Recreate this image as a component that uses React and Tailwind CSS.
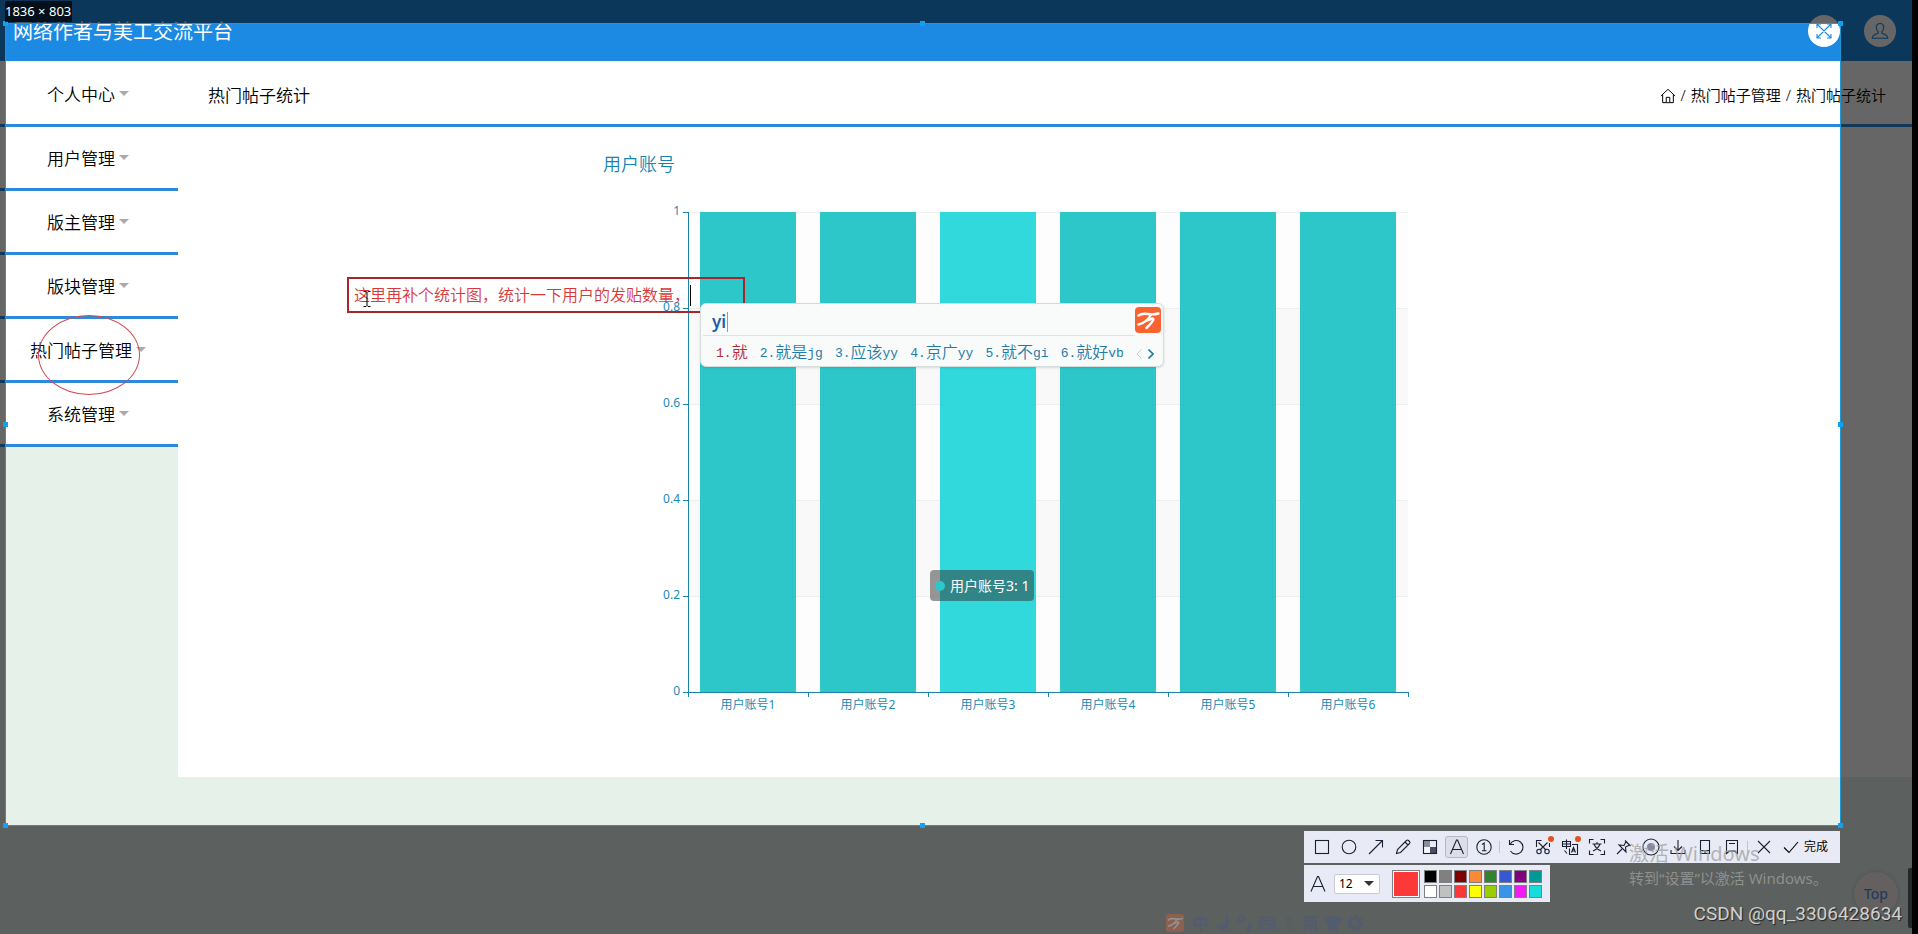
import { useState } from "react";
import clsx from "clsx";

const menus = ["个人中心", "用户管理", "版主管理", "版块管理", "热门帖子管理", "系统管理"];

const users = ["用户账号1", "用户账号2", "用户账号3", "用户账号4", "用户账号5", "用户账号6"];

const candidates = [
  { no: 1, word: "就", code: "" },
  { no: 2, word: "就是", code: "jg" },
  { no: 3, word: "应该", code: "yy" },
  { no: 4, word: "京广", code: "yy" },
  { no: 5, word: "就不", code: "gi" },
  { no: 6, word: "就好", code: "vb" },
];

const swatches = [
  ["黑", "bg-black"],
  ["灰", "bg-[#808080]"],
  ["深红", "bg-[#7f0000]"],
  ["橙", "bg-[#f98b36]"],
  ["绿", "bg-[#2f842d]"],
  ["蓝", "bg-[#3659d3]"],
  ["紫", "bg-[#800080]"],
  ["青", "bg-[#009a98]"],
  ["白", "bg-white"],
  ["浅灰", "bg-[#c0c0c0]"],
  ["红", "bg-[#fd3838]"],
  ["黄", "bg-[#ffff00]"],
  ["浅绿", "bg-[#9acd00]"],
  ["浅蓝", "bg-[#3894e4]"],
  ["洋红", "bg-[#f31bf3]"],
  ["浅青", "bg-[#16dcdc]"],
];

function Icon({ children, className = "size-[18px]" }) {
  return (
    <svg
      viewBox="0 0 18 18"
      className={className}
      fill="none"
      stroke="currentColor"
      strokeWidth="1.1"
      aria-hidden="true"
    >
      {children}
    </svg>
  );
}

function Logo({ className }) {
  return (
    <svg viewBox="0 0 26 26" className={className} aria-hidden="true">
      <rect width="26" height="26" rx="4" fill="#f96332" />
      <g fill="none" stroke="#fff" strokeWidth="2.4" strokeLinecap="round" strokeLinejoin="round">
        <path d="M3.500 8.500C7 6 10 6.500 13 7S20 7.500 23.500 6.500" />
        <path d="M3.500 17.500C8 16.500 13 13 15.500 8.500" />
        <path d="M11.500 13.500L17.500 11.500C19.500 11.500 18 15 11.500 21" />
      </g>
    </svg>
  );
}

function Header() {
  return (
    <header className="flex h-[61px] items-center justify-between bg-[#1c89e3] pr-4 pl-[13px]">
      <h1 className="pt-0.5 text-xl leading-5 text-white">网络作者与美工交流平台</h1>
      <div className="flex gap-6 text-[#1c89e3]">
        <button aria-label="全屏" className="flex size-8 items-center justify-center rounded-full bg-white">
          <Icon>
            <path d="M2 2l14 14M16 2L2 16M2 6V2h4M12 2h4v4M16 12v4h-4M6 16H2v-4" />
          </Icon>
        </button>
        <button aria-label="用户" className="flex size-8 items-center justify-center rounded-full bg-white">
          <Icon>
            <path d="M9 1.500c-2.600 0-3.700 1.800-3.700 4 0 1.900.8 3.300 1.900 4.200v1.600c-3 .9-6 2-6 4.900h15.600c0-2.900-3-4-6-4.900V9.700c1.100-.9 1.900-2.300 1.900-4.200 0-2.200-1.100-4-3.700-4z" />
          </Icon>
        </button>
      </div>
    </header>
  );
}

function Sidebar() {
  return (
    <nav className="w-[178px] shrink-0">
      <ul className="bg-white pt-0.5">
        {menus.map((name) => (
          <li key={name} className="border-b-3 border-[#2e89dd]">
            <a
              href="#"
              className="flex h-[61px] items-center justify-center gap-1 pt-0.5 pr-0.5 text-[17px] font-[350] text-black"
            >
              {name}
              <svg viewBox="0 0 10 5" className="mb-0.5 h-[5px] w-[10px]" aria-hidden="true">
                <path d="M0 0h10L5 5z" fill="#aaa" />
              </svg>
            </a>
          </li>
        ))}
      </ul>
    </nav>
  );
}

function Breadcrumb() {
  return (
    <div className="flex h-[66px] items-center justify-between border-b-3 border-[#2e89dd] pt-1.5 pr-[26px] pl-[30px] font-[350] text-black">
      <h2 className="text-[17px]">热门帖子统计</h2>
      <div className="flex items-center gap-[5px] text-[15px]">
        <a href="#" aria-label="首页">
          <Icon className="size-4">
            <path d="M1 9l8-7.500L17 9M3 7.500V16.500h12V7.500M7 16V10.500h4V16" />
          </Icon>
        </a>
        <span>/</span>
        <a href="#">热门帖子管理</a>
        <span>/</span>
        <span>热门帖子统计</span>
      </div>
    </div>
  );
}

function Chart({ active }) {
  const left = 90;
  const top = 60;
  const step = 96;
  const slot = 120;

  return (
    <svg viewBox="0 0 900 600" className="h-[600px] w-[900px]" role="img" aria-label="用户账号">
      <text x="5" y="19" fontSize="18" fontWeight="350" fill="#1585b0">
        用户账号
      </text>

      {/* split areas, darker on every second band */}
      {[0, 1, 2, 3, 4].map((i) => (
        <rect
          key={i}
          x={left}
          y={top + i * step}
          width="720"
          height={step}
          fill={i % 2 ? "#f9f9f9" : "#fdfdfd"}
        />
      ))}
      {[0, 1, 2, 3, 4].map((i) => (
        <rect key={i} x={left} y={top + i * step} width="720" height="1" fill="#eee" />
      ))}

      {users.map((name, i) => (
        <g key={name}>
          <rect
            x={left + 12 + i * slot}
            y={top}
            width="96"
            height="480"
            fill={i === active ? "#31d9dc" : "#2ec7c9"}
          />
          <text x={left + 60 + i * slot} y="557" fontSize="12" textAnchor="middle" fill="#1b8ab5">
            {name}
          </text>
        </g>
      ))}

      <g fill="#1b82a8">
        <rect x={left} y={top} width="1" height="485" />
        <rect x={left - 5} y="540" width="726" height="1" />
        {[0, 1, 2, 3, 4].map((i) => (
          <rect key={i} x={left - 5} y={top + i * step} width="5" height="1" />
        ))}
        {[1, 2, 3, 4, 5, 6].map((i) => (
          <rect key={i} x={left + i * slot} y="540" width="1" height="5" />
        ))}
      </g>
      {["1", "0.8", "0.6", "0.4", "0.2", "0"].map((label, i) => (
        <text key={label} x="82" y={top + 3 + i * step} fontSize="12" textAnchor="end" fill="#1b8ab5">
          {label}
        </text>
      ))}
    </svg>
  );
}

function Tooltip() {
  return (
    <div className="absolute top-[570px] left-[930px] flex h-[31px] items-center gap-[5px] rounded bg-[#323232]/50 px-[5px] text-sm whitespace-nowrap text-white">
      <span className="size-2.5 rounded-full bg-[#2ec7c9]" />
      用户账号3: 1
    </div>
  );
}

function Note() {
  const [text, setText] = useState("这里再补个统计图，统计一下用户的发贴数量，");

  return (
    <div className="absolute top-[277px] left-[347px] flex h-9 w-[398px] items-center border-2 border-[#a8262b] pl-[5px]">
      <input
        aria-label="批注"
        value={text}
        onChange={(e) => setText(e.target.value)}
        className="w-[336px] bg-transparent text-base font-[350] text-[#d8383a] outline-none"
      />
      <span className="h-[21px] w-px bg-black" />
      {/* mouse pointer over the text */}
      <svg viewBox="0 0 8 16" className="absolute top-3 left-[14px] h-4 w-2" fill="none" stroke="#000" aria-hidden="true">
        <path d="M0.500 0.500H3l1 1 1-1h2.500M4 1.500v13M0.500 15.500H3l1-1 1 1h2.500" />
      </svg>
    </div>
  );
}

function InputMethod() {
  return (
    <div className="absolute top-[303px] left-[700px] h-16 w-[464px] rounded-md border border-[#d5dcdc] bg-[#f9fbfa] shadow">
      <div className="ml-0.5 flex h-8 w-[432px] items-center gap-px border-b border-[#dfe3e3] pt-1 pl-[9px]">
        <span className="text-[17px] font-semibold text-[#1d5ca8]">yi</span>
        <span className="h-5 w-px bg-[#e08a2c]" />
      </div>
      <Logo className="absolute top-[3px] right-0.5 size-[26px]" />
      <div className="flex h-[30px] items-center gap-3 pt-1.5 pl-[15px]">
        {candidates.map((c) => (
          <button
            key={c.no}
            className={clsx(
              "flex items-center font-['Liberation_Mono','Noto_Sans_CJK_SC',monospace] text-[13px]",
              c.no === 1 ? "text-[#b8282e]" : "text-[#1f7ba8]"
            )}
          >
            {c.no}.<span className="text-base font-[350]">{c.word}</span>
            {c.code}
          </button>
        ))}
        <div className="flex gap-1.5">
          <button aria-label="上一页" className="text-[#c5cccc]">
            <svg viewBox="0 0 6 10" className="h-2.5 w-1.5" fill="none" stroke="currentColor">
              <path d="M5.500 0.500L1 5l4.500 4.500" />
            </svg>
          </button>
          <button aria-label="下一页" className="text-[#1f7ba8]">
            <svg viewBox="0 0 6 10" className="h-2.5 w-1.5" fill="none" stroke="currentColor" strokeWidth="1.600">
              <path d="M0.500 0.500L5 5L0.500 9.500" />
            </svg>
          </button>
        </div>
      </div>
    </div>
  );
}

const drawTools = [
  { name: "矩形", icon: <rect x="2.500" y="2.500" width="13" height="13" /> },
  { name: "椭圆", icon: <circle cx="9" cy="9" r="6.800" /> },
  { name: "箭头", icon: <path d="M2 16L15.500 2.500M8.500 2.500h7v7" /> },
  {
    name: "画笔",
    icon: <path d="M2.500 15.500l1-4L12.500 2.500q1-1 2 0l1 1q1 1 0 2L6.500 14.500zM11 4l3 3" />,
  },
  {
    name: "马赛克",
    icon: (
      <>
        <path d="M3 3h6v6H3zM9 9h6v6H9z" fill="#8b8f9c" stroke="none" />
        <path d="M9 3h6v6H9z" fill="#e8ebf5" stroke="none" />
        <path d="M3 9h6v6H3z" fill="#f4f6fb" stroke="none" />
        <path d="M9 9h6v6H9z" fill="#4a4e60" stroke="none" />
        <rect x="2.500" y="2.500" width="13" height="13" />
      </>
    ),
  },
  { name: "文字", active: true, icon: <path d="M2.500 16L8.500 2h1L15.500 16M4.500 11.500h9" /> },
  {
    name: "序号",
    icon: (
      <>
        <circle cx="9" cy="9" r="7.200" />
        <path d="M7 6.500L9.200 5v7.500M7 12.700h4.500" />
      </>
    ),
  },
];

const editTools = [
  { name: "撤销", icon: <path d="M2.500 2v4.500H7M3 6.500A6.800 6.800 0 1 1 3.500 13" /> },
  {
    name: "截取",
    dot: true,
    icon: (
      <>
        <path d="M2.500 9V2.500h5M15.500 9V5M4.500 4.500l7.500 7.500M13.500 4.500L6 12" />
        <circle cx="5" cy="13.500" r="2.200" />
        <circle cx="13" cy="13.500" r="2.200" />
      </>
    ),
  },
  {
    name: "翻译",
    dot: true,
    icon: (
      <>
        <path d="M1.500 3.500h8v5h-8zM5.500 1.500v9.500M1.500 6h8" />
        <path d="M11 6.500h5.500v10H8.500V10.500M10.500 14.500l2-5 2 5M11.200 13h2.600M3.500 12.500l2.500 3" />
      </>
    ),
  },
  {
    name: "识别文字",
    icon: <path d="M1.500 5.500V1.500h4M12.500 1.500h4v4M16.500 12.500v4h-4M5.500 16.500h-4v-4M4.500 6h9M9 4v2M12 6Q10 11 5 13M6 6Q8 11 13 13" />,
  },
  {
    name: "钉住",
    icon: <path d="M10 2.500l5.500 5.500M11 3.500L9 7.500l-5-.5 7 7-.5-5 4-2M7 11L2 16" />,
  },
  {
    name: "录制",
    icon: (
      <>
        <circle cx="9" cy="9" r="8" />
        <circle cx="9" cy="9" r="4" fill="#8688a0" stroke="none" />
      </>
    ),
  },
  { name: "下载", icon: <path d="M9 2v10M5 8.500l4 4 4-4M2 12v3.500h14V12" /> },
  { name: "手机", icon: <path d="M4.500 2.500h9v13h-9zM4.500 12.500h9M8 14h2" /> },
  { name: "收藏", icon: <path d="M3.500 15.500v-13h11v13l-3-2.500h-5zM6 5.500h6" /> },
];

function ToolButton({ tool }) {
  return (
    <button
      aria-label={tool.name}
      className={clsx(
        "relative flex h-5 w-[21px] items-center justify-center",
        tool.active && "rounded-xs bg-[#dcdfe8] outline outline-[#b4b8c2]"
      )}
    >
      <Icon>{tool.icon}</Icon>
      {tool.dot && <span className="absolute -top-px -right-px size-1.5 rounded-full bg-[#e2531c]" />}
    </button>
  );
}

function Toolbar() {
  const [size, setSize] = useState("12");

  return (
    <div className="absolute top-full right-0 mt-[6px] flex w-[536px] flex-col items-start gap-0.5 text-[#1b1f33]">
      <div className="flex h-8 w-full items-center gap-[6px] bg-[#e8ebf5] pl-[7px]">
        {drawTools.map((t) => (
          <ToolButton key={t.name} tool={t} />
        ))}
        <span className="-mx-px h-3 w-px bg-[#c0c4cf]" />
        {editTools.map((t) => (
          <ToolButton key={t.name} tool={t} />
        ))}
        <span className="-mx-px h-3 w-px bg-[#c0c4cf]" />
        <ToolButton tool={{ name: "取消", icon: <path d="M3 3l12 12M15 3L3 15" /> }} />
        <button className="ml-0.5 flex items-center gap-1 text-xs whitespace-nowrap text-black">
          <Icon>
            <path d="M2 9.500l5 5L16 4" />
          </Icon>
          完成
        </button>
      </div>

      <div className="flex h-[37px] items-center bg-[#e8ebf5] pr-2 pl-[5px]">
        <Icon className="size-[18px]">
          <path d="M2 16.500L8.500 1.500h1L16 16.500M4.500 11.500h9" />
        </Icon>
        <div className="relative ml-[7px] flex items-center">
          <select
            aria-label="字号"
            value={size}
            onChange={(e) => setSize(e.target.value)}
            className="h-5 w-[46px] appearance-none rounded-xs border border-[#c6cad6] bg-white pl-1 text-xs leading-4 text-black"
          >
            <option>12</option>
            <option>14</option>
            <option>16</option>
          </select>
          <svg viewBox="0 0 10 5" className="pointer-events-none absolute right-1.5 h-[5px] w-[10px]" aria-hidden="true">
            <path d="M0 0h10L5 5z" fill="#333" />
          </svg>
        </div>
        <button aria-label="当前颜色" className="ml-3 size-7 border border-[#808080] bg-white p-px">
          <span className="block size-full bg-[#fd3838]" />
        </button>
        <div className="ml-1 grid grid-cols-8 gap-0.5">
          {swatches.map(([name, color]) => (
            <button key={name} aria-label={name} className={clsx("size-[13px] border border-[#808080]", color)} />
          ))}
        </div>
      </div>
    </div>
  );
}

const handles = [
  "-top-[3px] -left-[3px]",
  "-top-[3px] left-1/2 -ml-[3px]",
  "-top-[3px] -right-[3px]",
  "top-1/2 -left-[3px] -mt-[3px]",
  "top-1/2 -right-[3px] -mt-[3px]",
  "-bottom-[3px] -left-[3px]",
  "-bottom-[3px] left-1/2 -ml-[3px]",
  "-bottom-[3px] -right-[3px]",
];

// The captured region. Its huge shadow dims everything around it.
function Selection() {
  return (
    <div className="absolute top-[23px] right-[77px] bottom-[108px] left-[5px] border border-[#1e98d4] shadow-[0_0_0_2000px_rgba(0,0,0,0.6)]">
      {handles.map((pos) => (
        <span key={pos} className={clsx("absolute size-[5px] bg-[#12a1ee]", pos)} />
      ))}
      <div className="absolute bottom-full -left-px mb-0.5 h-[21px] bg-black/70 pr-px text-[13px] leading-5 whitespace-nowrap text-white">
        1836 × 803
      </div>
      <Toolbar />
    </div>
  );
}

function InputTray() {
  return (
    <div className="absolute bottom-0.5 left-[1166px] flex h-[18px] items-center gap-1 text-[#46598a] opacity-45">
      <Logo className="size-[18px] opacity-70" />
      <span className="ml-1 w-[18px] text-base leading-4 font-bold">中</span>
      <Icon>
        <path d="M12 2q3 9-9 10 3 5 8 3 6-4 1-13z" fill="currentColor" />
      </Icon>
      <Icon>
        <circle cx="5" cy="5" r="2.500" strokeWidth="2" />
        <path d="M13 9q3 4-2 7" strokeWidth="3" />
      </Icon>
      <Icon>
        <path d="M1.500 3.500h15v11h-15zM1.500 7h15M1.500 10.500h15M6 3.500V7M12 3.500V7M9 7v3.500M5 10.500v4M13 10.500v4" strokeWidth="1.500" />
      </Icon>
      <Icon className="size-[18px] opacity-20">
        <circle cx="9" cy="5" r="3" fill="currentColor" />
        <path d="M4 15q5-10 10 0z" fill="currentColor" />
      </Icon>
      <span className="w-[18px] text-base leading-4 font-bold">简</span>
      <Icon>
        <path d="M6 2.500q3 2 6 0l5 3-2 4-2-1v7.500H5V8.500l-2 1-2-4z" fill="currentColor" />
      </Icon>
      <Icon>
        <circle cx="9" cy="9" r="5" strokeWidth="2.500" />
        <circle cx="9" cy="9" r="7" strokeWidth="2" strokeDasharray="2.750 2.750" />
      </Icon>
    </div>
  );
}

function Watermarks() {
  return (
    <>
      <div className="pointer-events-none absolute right-[94px] bottom-[46px] w-[195px] whitespace-nowrap text-[#a0a0a0]/75">
        <p className="text-xl leading-7">激活 Windows</p>
        <p className="text-[15px] leading-5">转到“设置”以激活 Windows。</p>
      </div>
      <p className="pointer-events-none absolute right-4 bottom-2 font-[Roboto,sans-serif] text-[19px] leading-6 whitespace-nowrap text-[#d0d0d0] [text-shadow:1px_1px_1px_#222]">
        CSDN @qq_3306428634
      </p>
    </>
  );
}

function App() {
  return (
    <div className="relative flex min-h-screen overflow-hidden bg-[#e6f1ea] font-['Noto_Sans','Noto_Sans_CJK_SC',sans-serif]">
      <div className="min-w-0 flex-1">
        <Header />
        <div className="flex items-start">
          <Sidebar />
          <main className="min-w-0 flex-1 bg-white">
            <Breadcrumb />
            <div className="flex justify-center py-[25px] pl-1.5">
              <Chart active={2} />
            </div>
          </main>
        </div>
      </div>
      <div className="w-1.5 bg-black" />

      <button className="absolute right-5 bottom-[18px] size-11 rounded-full bg-[#faf0ee] text-sm text-[#3a8ee0] shadow-[0_0_4px_#b4c6dc]">
        Top
      </button>
      <Tooltip />

      <Selection />
      <div className="absolute right-1.5 bottom-1.5 h-[60px] w-1 rounded-l-xs bg-[#25282b]" />
      <div className="absolute top-[315px] left-[38px] h-20 w-[102px] rounded-[50%] border border-[#cf4a50]" />
      <Note />
      <InputMethod />
      <InputTray />
      <Watermarks />
    </div>
  );
}

export default App;
